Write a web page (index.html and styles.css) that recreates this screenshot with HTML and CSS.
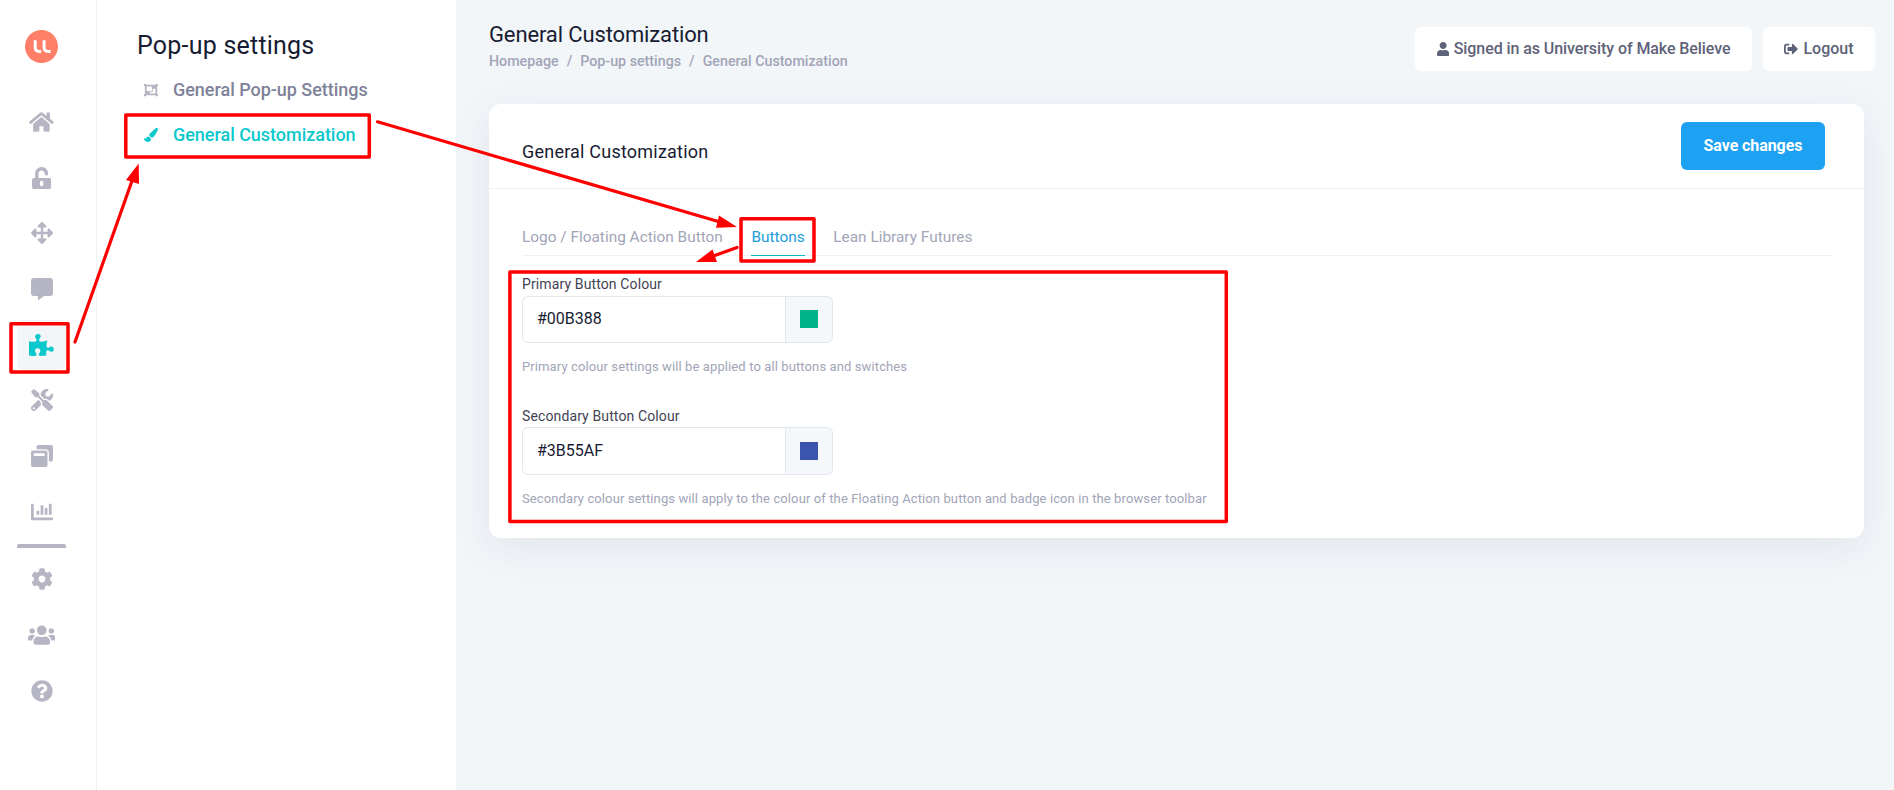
FILE: index.html
```html
<!DOCTYPE html>
<html lang="en">
<head>
    <meta charset="UTF-8">
    <meta name="viewport" content="width=device-width, initial-scale=1.0">
    <title>General Customization</title>
    <link rel="stylesheet" href="styles.css">
</head>
<body>
    <nav class="rail">
        <svg class="logo" viewBox="0 0 33 33">
            <circle cx="16.5" cy="16.5" r="16.5" fill="#ff7f69"/>
            <path d="M10.2 10.3v6.9q0 4.2 4.2 4.2h1.8M19.1 10.3v6.9q0 4.2 4.2 4.2h2.4" fill="none" stroke="#fff" stroke-width="3"/>
        </svg>
        <div class="rail-items">
            <a class="rail-item"><svg class="icon" viewBox="0 0 576 512"><path d="M280.37 148.26L96 300.11V464a16 16 0 0 0 16 16l112.06-.29a16 16 0 0 0 15.92-16V368a16 16 0 0 1 16-16h64a16 16 0 0 1 16 16v95.64a16 16 0 0 0 16 16.05L464 480a16 16 0 0 0 16-16V300L295.67 148.26a12.19 12.19 0 0 0-15.3 0zM571.6 251.47L488 182.56V44.05a12 12 0 0 0-12-12h-56a12 12 0 0 0-12 12v72.61L318.47 43a48 48 0 0 0-61 0L4.34 251.47a12 12 0 0 0-1.6 16.9l25.5 31A12 12 0 0 0 45.15 301l235.22-193.74a12.19 12.19 0 0 1 15.3 0L530.9 301a12 12 0 0 0 16.9-1.6l25.5-31a12 12 0 0 0-1.7-16.93z"/></svg></a>
            <a class="rail-item"><svg class="icon" viewBox="0 0 448 512"><path d="M400 256H152V152.9c0-39.6 31.7-72.5 71.3-72.9 40-.4 72.7 32.1 72.7 72v16c0 13.3 10.7 24 24 24h32c13.3 0 24-10.7 24-24v-16C376 68 307.5-.3 223.5 0 139.5.3 72 69.5 72 153.5V256H48c-26.5 0-48 21.5-48 48v160c0 26.5 21.5 48 48 48h352c26.5 0 48-21.5 48-48V304c0-26.5-21.5-48-48-48zM264 408c0 22.1-17.9 40-40 40s-40-17.9-40-40v-48c0-22.1 17.9-40 40-40s40 17.9 40 40v48z"/></svg></a>
            <a class="rail-item"><svg class="icon" viewBox="0 0 512 512"><path d="M352.201 425.775l-79.196 79.196c-9.373 9.373-24.568 9.373-33.941 0l-79.196-79.196c-15.119-15.119-4.411-40.971 16.971-40.97h51.162L228 284H127.196v51.162c0 21.382-25.851 32.09-40.971 16.971L7.029 272.937c-9.373-9.373-9.373-24.569 0-33.941L86.225 159.8c15.119-15.119 40.971-4.411 40.971 16.971V228H228V127.196h-51.23c-21.382 0-32.09-25.851-16.971-40.971l79.196-79.196c9.373-9.373 24.568-9.373 33.941 0l79.196 79.196c15.119 15.119 4.411 40.971-16.971 40.971h-51.162V228h100.804v-51.162c0-21.382 25.851-32.09 40.97-16.971l79.196 79.196c9.373 9.373 9.373 24.569 0 33.941L425.773 352.2c-15.119 15.119-40.971 4.411-40.97-16.971V284H284v100.804h51.23c21.382 0 32.09 25.851 16.971 40.971z"/></svg></a>
            <a class="rail-item"><svg class="icon" viewBox="0 0 512 512"><path d="M448 0H64C28.7 0 0 28.7 0 64v288c0 35.3 28.7 64 64 64h96v84c0 9.8 11.2 15.5 19.1 9.7L304 416h144c35.3 0 64-28.7 64-64V64c0-35.3-28.7-64-64-64z"/></svg></a>
            <a class="rail-item active"><svg class="icon" viewBox="0 0 576 512"><path d="M519.442 288.651c-41.519 0-59.5 31.593-82.058 31.593C377.409 320.244 432 144 432 144s-196.288 80-196.288-3.297c0-35.827 36.288-46.25 36.288-85.985C272 19.216 243.885 0 210.539 0c-34.654 0-66.366 18.891-66.366 56.346 0 41.364 31.711 59.277 31.711 81.75C175.885 207.719 0 166.758 0 166.758v333.237s178.635 41.047 178.635-28.662c0-22.473-40-40.107-40-81.471 0-37.456 29.25-56.346 63.577-56.346 33.673 0 61.788 19.216 61.788 54.717 0 39.735-36.288 50.158-36.288 85.985 0 60.803 129.675 25.73 181.23 25.73 0 0-34.725-120.101 25.827-120.101 35.962 0 46.423 36.152 86.308 36.152C556.712 416 576 387.99 576 354.443c0-34.199-18.962-65.792-56.558-65.792z"/></svg></a>
            <a class="rail-item"><svg class="icon" viewBox="0 0 512 512"><path d="M501.1 395.7L384 278.6c-23.1-23.1-57.6-27.6-85.4-13.9L192 158.1V96L64 0 0 64l96 128h62.1l106.6 106.6c-13.6 27.8-9.2 62.3 13.9 85.4l117.1 117.1c14.6 14.6 38.2 14.6 52.7 0l52.7-52.7c14.5-14.6 14.5-38.2 0-52.7zM331.7 225c28.3 0 54.9 11 74.9 31l19.4 19.4c15.8-6.9 30.8-16.5 43.8-29.5 37.1-37.1 49.7-89.3 37.9-136.7-2.2-9-13.5-12.1-20.1-5.5l-74.4 74.4-67.9-11.3L334 98.9l74.4-74.4c6.6-6.6 3.4-17.9-5.7-20.2-47.4-11.7-99.6.9-136.6 37.9-28.5 28.5-41.9 66.1-41.2 103.6l82.1 82.1c8.1-1.9 16.5-2.9 24.7-2.9zm-103.9 82l-56.7-56.7L18.7 402.8c-25 25-25 65.5 0 90.5s65.5 25 90.5 0l123.6-123.6c-7.6-19.9-9.9-41.6-5-62.7zM64 472c-13.2 0-24-10.8-24-24 0-13.3 10.7-24 24-24s24 10.7 24 24c0 13.2-10.7 24-24 24z"/></svg></a>
            <a class="rail-item"><svg class="icon" viewBox="0 0 512 512"><path d="M512 48v288c0 26.5-21.5 48-48 48h-48V176c0-44.1-35.9-80-80-80H128V48c0-26.5 21.5-48 48-48h288c26.5 0 48 21.5 48 48zM384 176v288c0 26.5-21.5 48-48 48H48c-26.5 0-48-21.5-48-48V176c0-26.5 21.5-48 48-48h288c26.5 0 48 21.5 48 48zm-68 28c0-6.6-5.4-12-12-12H76c-6.6 0-12 5.4-12 12v52h252v-52z"/></svg></a>
            <a class="rail-item"><svg class="icon" viewBox="0 0 512 512"><path d="M332.8 320h38.4c6.4 0 12.8-6.4 12.8-12.8V172.8c0-6.4-6.4-12.8-12.8-12.8h-38.4c-6.4 0-12.8 6.4-12.8 12.8v134.4c0 6.4 6.4 12.8 12.8 12.8zm96 0h38.4c6.4 0 12.8-6.4 12.8-12.8V76.8c0-6.4-6.4-12.8-12.8-12.8h-38.4c-6.4 0-12.8 6.4-12.8 12.8v230.4c0 6.4 6.4 12.8 12.8 12.8zm-288 0h38.4c6.4 0 12.8-6.4 12.8-12.8v-70.4c0-6.4-6.4-12.8-12.8-12.8h-38.4c-6.4 0-12.8 6.4-12.8 12.8v70.4c0 6.4 6.4 12.8 12.8 12.8zm96 0h38.4c6.4 0 12.8-6.4 12.8-12.8V108.8c0-6.4-6.4-12.8-12.8-12.8h-38.4c-6.4 0-12.8 6.4-12.8 12.8v198.4c0 6.4 6.4 12.8 12.8 12.8zM496 384H64V80c0-8.84-7.16-16-16-16H16C7.16 64 0 71.16 0 80v336c0 17.67 14.33 32 32 32h464c8.84 0 16-7.16 16-16v-32c0-8.84-7.16-16-16-16z"/></svg></a>
        </div>
        <div class="rail-divider"></div>
        <div class="rail-items bottom">
            <a class="rail-item"><svg class="icon" viewBox="0 0 512 512"><path d="M487.4 315.7l-42.6-24.6c4.3-23.2 4.3-47 0-70.2l42.6-24.6c4.9-2.8 7.1-8.6 5.5-14-11.1-35.6-30-67.8-54.7-94.6-3.8-4.1-10-5.1-14.8-2.3L380.8 110c-17.9-15.4-38.5-27.3-60.8-35.1V25.8c0-5.6-3.9-10.5-9.4-11.7-36.7-8.2-74.3-7.8-109.2 0-5.5 1.2-9.4 6.1-9.4 11.7V75c-22.2 7.9-42.8 19.8-60.8 35.1L88.7 85.5c-4.9-2.8-11-1.9-14.8 2.3-24.7 26.7-43.6 58.9-54.7 94.6-1.7 5.4.6 11.2 5.5 14L67.3 221c-4.3 23.2-4.3 47 0 70.2l-42.6 24.6c-4.9 2.8-7.1 8.6-5.5 14 11.1 35.6 30 67.8 54.7 94.6 3.8 4.1 10 5.1 14.8 2.3l42.6-24.6c17.9 15.4 38.5 27.3 60.8 35.1v49.2c0 5.6 3.9 10.5 9.4 11.7 36.7 8.2 74.3 7.8 109.2 0 5.5-1.2 9.4-6.1 9.4-11.7v-49.2c22.2-7.9 42.8-19.8 60.8-35.1l42.6 24.6c4.9 2.8 11 1.9 14.8-2.3 24.7-26.7 43.6-58.9 54.7-94.6 1.5-5.5-.7-11.3-5.6-14.1zM256 336c-44.1 0-80-35.9-80-80s35.9-80 80-80 80 35.9 80 80-35.9 80-80 80z"/></svg></a>
            <a class="rail-item"><svg class="icon" viewBox="0 0 640 512"><path d="M96 224c35.3 0 64-28.7 64-64s-28.7-64-64-64-64 28.7-64 64 28.7 64 64 64zm448 0c35.3 0 64-28.7 64-64s-28.7-64-64-64-64 28.7-64 64 28.7 64 64 64zm32 32h-64c-17.6 0-33.5 7.1-45.1 18.6 40.3 22.1 68.9 62 75.1 109.4h66c17.7 0 32-14.3 32-32v-32c0-35.3-28.7-64-64-64zm-256 0c61.9 0 112-50.1 112-112S381.9 32 320 32 208 82.1 208 144s50.1 112 112 112zm76.8 32h-8.3c-20.8 10-43.9 16-68.5 16s-47.6-6-68.5-16h-8.3C179.6 288 128 339.6 128 403.2V432c0 26.5 21.5 48 48 48h288c26.5 0 48-21.5 48-48v-28.8c0-63.6-51.6-115.2-115.2-115.2zm-223.7-13.4C161.5 263.1 145.6 256 128 256H64c-35.3 0-64 28.7-64 64v32c0 17.7 14.3 32 32 32h65.9c6.3-47.4 34.9-87.3 75.2-109.4z"/></svg></a>
            <a class="rail-item"><svg class="icon" viewBox="0 0 512 512"><path d="M504 256c0 136.997-111.043 248-248 248S8 392.997 8 256C8 119.083 119.043 8 256 8s248 111.083 248 248zM262.655 90c-54.497 0-89.255 22.957-116.549 63.758-3.536 5.286-2.353 12.415 2.715 16.258l34.699 26.31c5.205 3.947 12.621 3.008 16.665-2.122 17.864-22.658 30.113-35.797 57.303-35.797 20.429 0 45.698 13.148 45.698 32.958 0 14.976-12.363 22.667-32.534 33.976C247.128 238.528 216 254.941 216 296v4c0 6.627 5.373 12 12 12h56c6.627 0 12-5.373 12-12v-1.333c0-28.462 83.186-29.647 83.186-106.667 0-58.002-60.165-102-116.531-102zM256 338c-25.365 0-46 20.635-46 46 0 25.364 20.635 46 46 46s46-20.636 46-46c0-25.365-20.635-46-46-46z"/></svg></a>
        </div>
    </nav>

    <aside class="panel">
        <h2 class="panel-title">Pop-up settings</h2>
        <a class="panel-link">
            <svg class="icon" viewBox="0 0 512 512"><path fill-rule="evenodd" d="M0 32h76v32h360V32h76v76h-32v296h32v76h-76v-32H76v32H0v-76h32V108H0zM96 128v160h192V128zM320 208v112H208v64h208V208z"/></svg>
            <span>General Pop-up Settings</span>
        </a>
        <a class="panel-link active">
            <svg class="icon" viewBox="0 0 512 512"><path d="M167.02 309.34c-40.12 2.58-76.53 17.86-97.19 72.3-2.35 6.21-8 9.98-14.59 9.98-11.11 0-45.46-27.67-55.25-34.35C0 439.62 37.93 512 128 512c75.86 0 128-43.77 128-120.19 0-3.11-.65-6.08-.97-9.13l-88.01-73.34zM457.89 0c-15.16 0-29.37 6.71-40.21 16.45C213.27 199.05 192 203.34 192 257.09c0 13.7 3.25 26.76 8.73 38.7l63.82 53.18c7.21 1.8 14.64 3.03 22.39 3.03 62.11 0 98.11-45.47 211.16-256.46 7.38-14.35 13.9-29.85 13.9-45.99C512 20.64 486 0 457.89 0z"/></svg>
            <span>General Customization</span>
        </a>
    </aside>

    <main class="main">
        <header class="header">
            <div class="heading">
                <h1 class="page-title">General Customization</h1>
                <div class="breadcrumb"><span>Homepage</span><span>/</span><span>Pop-up settings</span><span>/</span><span>General Customization</span></div>
            </div>
            <div class="header-buttons">
                <button class="header-btn"><svg class="icon" viewBox="0 0 448 512"><path d="M224 256c70.7 0 128-57.3 128-128S294.7 0 224 0 96 57.3 96 128s57.3 128 128 128zm89.6 32h-16.7c-22.2 10.2-46.9 16-72.9 16s-50.6-5.8-72.9-16h-16.7C60.2 288 0 348.2 0 422.4V464c0 26.5 21.5 48 48 48h352c26.5 0 48-21.5 48-48v-41.6c0-74.2-60.2-134.4-134.4-134.4z"/></svg><span class="signed-in">Signed in as University of Make Believe</span></button>
                <button class="header-btn logout"><svg class="icon" viewBox="0 0 512 512"><path d="M497 273L329 441c-15 15-41 4.5-41-17v-96H152c-13.3 0-24-10.7-24-24v-96c0-13.3 10.7-24 24-24h136V88c0-21.4 25.9-32 41-17l168 168c9.3 9.4 9.3 24.6 0 34zM192 436v-40c0-6.6-5.4-12-12-12H96c-17.7 0-32-14.3-32-32V160c0-17.7 14.3-32 32-32h84c6.6 0 12-5.4 12-12V76c0-6.6-5.4-12-12-12H96c-53 0-96 43-96 96v192c0 53 43 96 96 96h84c6.6 0 12-5.4 12-12z"/></svg><span>Logout</span></button>
            </div>
        </header>

        <section class="card">
            <div class="card-header">
                <h3 class="card-title">General Customization</h3>
                <button class="save-btn">Save changes</button>
            </div>
            <div class="card-body">
                <div class="tabs">
                    <a class="tab">Logo / Floating Action Button</a>
                    <a class="tab active">Buttons</a>
                    <a class="tab">Lean Library Futures</a>
                </div>
                <div class="field">
                    <label class="field-label" for="primary">Primary Button Colour</label>
                    <div class="input-group">
                        <input type="text" id="primary" class="input" value="#00B388">
                        <span class="addon"><i class="swatch primary"></i></span>
                    </div>
                    <p class="help">Primary colour settings will be applied to all buttons and switches</p>
                </div>
                <div class="field second">
                    <label class="field-label" for="secondary">Secondary Button Colour</label>
                    <div class="input-group">
                        <input type="text" id="secondary" class="input" value="#3B55AF">
                        <span class="addon"><i class="swatch secondary"></i></span>
                    </div>
                    <p class="help">Secondary colour settings will apply to the colour of the Floating Action button and badge icon in the browser toolbar</p>
                </div>
            </div>
        </section>
    </main>

    <!-- walkthrough boxes and arrows -->
    <svg class="annotations" viewBox="0 0 1894 790">
        <g fill="none" stroke="#f00" stroke-width="3.5" stroke-linejoin="round" stroke-linecap="round">
            <rect x="11" y="323.7" width="57" height="48.3"/>
            <rect x="125.8" y="114.9" width="243.5" height="42"/>
            <rect x="741" y="218.8" width="73" height="42.2"/>
            <rect x="509.9" y="272" width="716.4" height="249.6"/>
            <path d="M75 342L133 178M377.5 121.8L720 222M737 247.5L712 256.5" stroke-width="3.2"/>
        </g>
        <path d="M138.7 163.5L139 184L126 180zM737 227L719 215.5L716 227.8zM696 262L712.5 249.5L717 262z" fill="#f00"/>
    </svg>
</body>
</html>
```
FILE: styles.css
```css
* {
    box-sizing: border-box;
}
body {
    margin: 0;
    height: 790px;
    display: flex;
    overflow: hidden;
    position: relative;
    font-family: Roboto, 'Liberation Sans', sans-serif;
    background-color: #f2f6f9;
    color: #181c32;
}
h1, h2, h3, p {
    margin: 0;
    font-weight: 400;
}
button, input {
    font-family: inherit;
}
.icon {
    display: block;
    height: 22px;
    fill: currentColor;
}

/* icon rail */
.rail {
    width: 97px;
    flex: none;
    padding: 30px 0 0 17px;
    background-color: #fff;
    border-right: 1px solid #eff2f5;
    color: #b5b5c3;
}
.logo {
    display: block;
    width: 33px;
    height: 33px;
    margin-left: 8px;
}
.rail-items {
    display: flex;
    flex-direction: column;
    gap: 5.66px;
    width: 49px;
    margin-top: 34px;
}
.rail-item {
    display: flex;
    align-items: center;
    justify-content: center;
    height: 50px;
    border-radius: 6px;
}
.rail-item.active {
    background-color: #f3f6f9;
    color: #0bc8cc;
}
.rail-divider {
    width: 49px;
    height: 4px;
    margin-top: 7.4px;
    border-radius: 2px 2px 0 0;
    background-color: #b5b5c3;
}
.rail-items.bottom {
    margin-top: 6px;
    gap: 6px;
}

/* settings menu */
.panel {
    width: 359px;
    flex: none;
    padding: 29px 0 0 40px;
    background-color: #fff;
}
.panel-title {
    font-size: 25px;
    line-height: 34px;
    letter-spacing: 0.22px;
}
.panel-link {
    display: flex;
    align-items: center;
    gap: 15px;
    height: 45px;
    padding-left: 7px;
    font-size: 18px;
    font-weight: 500;
    letter-spacing: -0.03px;
    color: #7e8299;
}
.panel-title + .panel-link {
    margin-top: 4px;
}
.panel-link .icon {
    width: 14px;
    height: 14px;
    color: #b5b5c3;
}
.panel-link.active, .panel-link.active .icon {
    color: #0bc8cc;
}

/* content */
.main {
    flex: 1;
    padding: 0 30px 0 33px;
}
.header {
    display: flex;
    justify-content: space-between;
    height: 104px;
    padding-top: 20px;
    margin-right: -11px;
}
.page-title {
    padding-top: 1px;
    font-size: 22px;
    line-height: 28px;
    letter-spacing: -0.13px;
}
.breadcrumb {
    display: flex;
    gap: 8px;
    font-size: 14.25px;
    font-weight: 500;
    line-height: 25px;
    color: #a1a5b7;
}
.header-buttons {
    display: flex;
    gap: 11px;
    padding-top: 7px;
}
.header-btn {
    display: flex;
    align-items: center;
    justify-content: center;
    gap: 5px;
    width: 337px;
    height: 44px;
    padding-bottom: 3px;
    border: none;
    border-radius: 6px;
    background-color: #fff;
    color: #5e6278;
    font-size: 16px;
    font-weight: 500;
}
.signed-in {
    letter-spacing: -0.08px;
}
.header-btn.logout {
    width: 112px;
}
.header-btn .icon {
    height: 14px;
    margin-top: 1px;
}
.card {
    height: 434px;
    background-color: #fff;
    border-radius: 12px;
    box-shadow: 0 10px 40px rgba(76, 87, 125, 0.1);
}
.card-header {
    display: flex;
    justify-content: space-between;
    height: 85px;
    padding: 18px 39px 0 33px;
    border-bottom: 1px solid #eff2f5;
}
.card-title {
    font-size: 18px;
    line-height: 60px;
    letter-spacing: 0.21px;
}
.save-btn {
    width: 144px;
    height: 48px;
    padding-bottom: 3px;
    border: none;
    border-radius: 6px;
    background-color: #1da1f2;
    color: #fff;
    font-size: 16px;
    font-weight: 700;
    letter-spacing: -0.08px;
}
.card-body {
    padding: 29px 31px 0 33px;
}
.tabs {
    display: flex;
    gap: 28.6px;
    height: 38px;
    border-bottom: 1px solid #eff2f5;
    font-size: 15.4px;
    line-height: 39px;
    color: #a1a5b7;
}
.tab {
    height: 38px;
}
.tab.active {
    color: #1b9bd8;
    border-bottom: 1px solid #0bb7c4;
}
.field {
    height: 131px;
    padding-top: 18px;
}
.field-label {
    display: block;
    margin-bottom: 2px;
    font-size: 14px;
    line-height: 20px;
    letter-spacing: 0.12px;
    color: #3f4254;
}
.input-group {
    display: flex;
    width: 311px;
    height: 47px;
}
.second .field-label {
    line-height: 22px;
    margin-bottom: 0;
}
.second .input-group {
    height: 48px;
}
.input {
    width: 264px;
    padding: 0 14px 3px;
    border: 1px solid #e4e6ef;
    border-radius: 6px 0 0 6px;
    font-size: 16px;
    color: #181c32;
}
.second .input {
    padding-bottom: 2px;
}
.addon {
    display: flex;
    align-items: center;
    justify-content: center;
    width: 47px;
    padding-bottom: 1px;
    border: 1px solid #e4e6ef;
    border-left: none;
    border-radius: 0 6px 6px 0;
    background-color: #f5f8fa;
}
.swatch {
    width: 18px;
    height: 18px;
}
.swatch.primary {
    background-color: #00b388;
}
.swatch.secondary {
    background-color: #3b55af;
}
.help {
    margin-top: 13px;
    font-size: 13px;
    line-height: 22px;
    letter-spacing: 0.11px;
    color: #a1a5b7;
}

.annotations {
    position: absolute;
    top: 0;
    left: 0;
    width: 1894px;
    height: 790px;
    pointer-events: none;
}
```
